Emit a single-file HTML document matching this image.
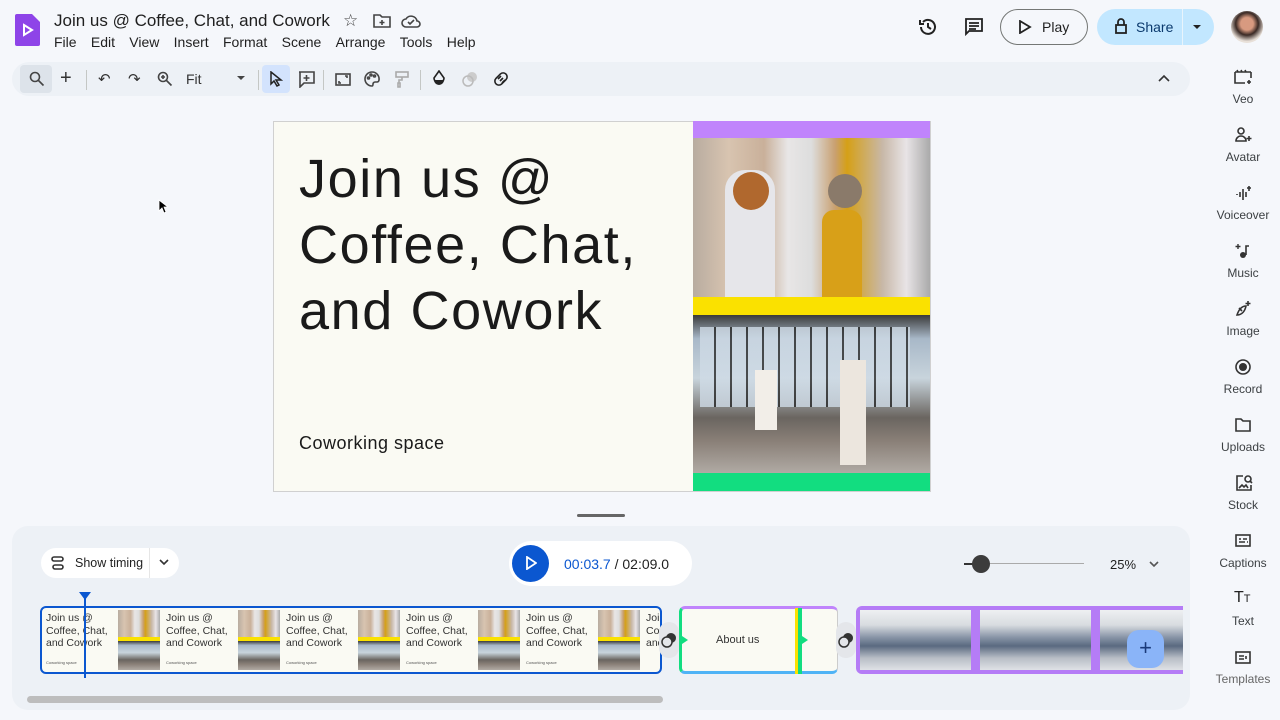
<!DOCTYPE html>
<html><head><meta charset="utf-8"><style>
*{box-sizing:border-box;margin:0;padding:0}
body{width:1280px;height:720px;overflow:hidden;background:#f5f7fb;font-family:"Liberation Sans",sans-serif;color:#1f1f1f;position:relative}
.abs{position:absolute}
.menu span{margin-right:14.3px}
.tb{position:absolute;top:62px;left:12px;width:1178px;height:34px;background:#edf1f6;border-radius:17px}
.ic{position:absolute;stroke:#444;fill:none;stroke-width:1.6}
.side{position:absolute;left:1204px;width:78px;text-align:center;font-size:12px;color:#3c4043}
.photoA{background:linear-gradient(90deg,#b8aca0 0%,#d8c4b0 15%,#c9b09a 30%,#e8e6e6 40%,#ddd 50%,#c9a070 60%,#d5a017 65%,#c8b8a8 80%,#e8e4e6 90%,#aaa 100%)}
.photoB{background:linear-gradient(180deg,#3a3a3a 0%,#a8b8c8 15%,#c8d4dc 40%,#6a6560 65%,#8a8078 80%,#b0aaa4 100%)}
.unit{position:absolute;top:0;width:120px;height:64px}
.unit .t{position:absolute;left:4px;top:4px;font-size:10.5px;line-height:12.5px;color:#333}
.unit .s{position:absolute;left:4px;top:52px;font-size:4px;color:#555}
.unit .im{position:absolute;left:76px;top:2px;width:42px;height:60px}
.ph3{position:absolute;top:610px;height:60px;background:linear-gradient(180deg,#eef0f2 0%,#d8dce0 25%,#8a96a8 45%,#5a6a80 60%,#b8bec6 80%,#dfe2e6 100%)}
</style></head><body>
<svg class="abs" style="left:15px;top:14px" width="26" height="32" viewBox="0 0 26 32"><path d="M2 0h15l8 8v22a2 2 0 0 1-2 2H2a2 2 0 0 1-2-2V2a2 2 0 0 1 2-2z" fill="#8e44e8"/><path d="M9 11l8 5-8 5z" fill="none" stroke="#fff" stroke-width="2"/></svg>
<div class="abs" style="left:54px;top:11px;font-size:17px;color:#1f1f1f">Join us @ Coffee, Chat, and Cowork</div>
<div class="abs" style="left:343px;top:11px;font-size:17px;color:#444">☆</div>
<svg class="ic" style="left:373px;top:13px" width="18" height="16" viewBox="0 0 18 16"><path d="M1 2h6l2 2h8v10H1z"/><path d="M9 7v5M6.5 9.5h5"/></svg>
<svg class="ic" style="left:401px;top:13px" width="20" height="16" viewBox="0 0 20 16"><path d="M5 14a4 4 0 0 1 0-8 6 6 0 0 1 11 2 3 3 0 0 1 0 6z"/><path d="M7 9l2 2 4-4"/></svg>
<div class="abs menu" style="left:54px;top:34px;font-size:14px;color:#1f1f1f"><span>File</span><span>Edit</span><span>View</span><span>Insert</span><span>Format</span><span>Scene</span><span>Arrange</span><span>Tools</span><span>Help</span></div>
<svg class="ic" style="left:918px;top:17px;stroke:#222;stroke-width:2" width="20" height="20" viewBox="0 0 20 20"><path d="M3 10a7 7 0 1 0 2-5"/><path d="M2 3v4h4"/><path d="M10 6v4l3 2"/></svg>
<svg class="ic" style="left:964px;top:17px;stroke:#222;stroke-width:1.8" width="20" height="20" viewBox="0 0 20 20"><path d="M2 2h16v12H5l-3 3z"/><path d="M5 6h10M5 9h10M5 12h7"/></svg>
<div class="abs" style="left:1000px;top:9px;width:88px;height:36px;border:1px solid #747775;border-radius:18px;font-size:14px;padding:9px 0 0 41px">Play</div>
<svg class="ic" style="left:1018px;top:20px;stroke:#222;stroke-width:1.8" width="14" height="14" viewBox="0 0 14 14"><path d="M2 1l10 6-10 6z"/></svg>
<div class="abs" style="left:1097px;top:9px;width:117px;height:36px;background:#c2e7ff;border-radius:18px"></div>
<div class="abs" style="left:1182px;top:9px;width:1px;height:36px;background:#e8f4fc"></div>
<svg class="ic" style="left:1114px;top:18px;stroke:#222;stroke-width:1.8" width="14" height="16" viewBox="0 0 14 16"><rect x="2" y="7" width="10" height="8"/><path d="M4 7V4a3 3 0 0 1 6 0v3"/></svg>
<div class="abs" style="left:1136px;top:19px;font-size:14px;color:#0b3a6e">Share</div>
<div class="abs" style="left:1193px;top:25px;border:4px solid transparent;border-top:4px solid #222"></div>
<div class="abs" style="left:1231px;top:11px;width:32px;height:32px;border-radius:50%;background:radial-gradient(circle at 50% 40%,#d89a80 25%,#3a2a25 45%,#e8e0d8 70%)"></div>
<div class="tb"></div>
<div class="abs" style="left:20px;top:65px;width:32px;height:28px;background:#dde3ea;border-radius:4px"></div>
<svg class="ic" style="left:29px;top:71px" width="16" height="16" viewBox="0 0 16 16"><circle cx="6" cy="6" r="4.5"/><path d="M9.5 9.5l5 5"/></svg>
<div class="abs" style="left:60px;top:67px;font-size:20px;color:#333">+</div>
<div class="abs" style="left:86px;top:70px;width:1px;height:20px;background:#c4c7c5"></div>
<div class="abs" style="left:98px;top:70px;font-size:15px;color:#333">↶</div>
<div class="abs" style="left:128px;top:70px;font-size:15px;color:#333">↷</div>
<svg class="ic" style="left:157px;top:71px" width="16" height="16" viewBox="0 0 16 16"><circle cx="6" cy="6" r="4.5"/><path d="M9.5 9.5l5 5M6 4v4M4 6h4"/></svg>
<div class="abs" style="left:186px;top:71px;font-size:14px;color:#333">Fit</div>
<div class="abs" style="left:237px;top:76px;border:4px solid transparent;border-top:4px solid #444"></div>
<div class="abs" style="left:258px;top:70px;width:1px;height:20px;background:#c4c7c5"></div>
<div class="abs" style="left:262px;top:65px;width:28px;height:28px;background:#d3e3fd;border-radius:4px"></div>
<svg class="abs" style="left:269px;top:71px" width="14" height="16" viewBox="0 0 14 16"><path d="M2 1l10 8H7l3 5-2 1-3-5-3 3z" fill="none" stroke="#222" stroke-width="1.5"/></svg>
<svg class="ic" style="left:298px;top:71px" width="17" height="17" viewBox="0 0 17 17"><path d="M1 1h15v11H6l-4 4V1"/><path d="M8.5 4v6M5.5 7h6"/></svg>
<div class="abs" style="left:323px;top:70px;width:1px;height:20px;background:#c4c7c5"></div>
<svg class="ic" style="left:335px;top:73px" width="16" height="13" viewBox="0 0 16 13"><rect x="1" y="1" width="14" height="11"/><path d="M4 8v2h2M12 5V3h-2"/></svg>
<svg class="ic" style="left:364px;top:71px" width="16" height="16" viewBox="0 0 16 16"><path d="M8 1a7 7 0 1 0 0 14c1 0 1-1 1-2s1-2 2-2h2a2 2 0 0 0 2-2 7 7 0 0 0-7-8z"/><circle cx="4.5" cy="7" r="1"/><circle cx="7" cy="4" r="1"/><circle cx="10.5" cy="5" r="1"/></svg>
<svg class="ic" style="left:394px;top:71px;stroke:#aaa" width="16" height="17" viewBox="0 0 16 17"><rect x="2" y="1" width="12" height="5"/><path d="M8 6v3H5v3M4 12h2v4H4z"/></svg>
<div class="abs" style="left:420px;top:70px;width:1px;height:20px;background:#c4c7c5"></div>
<svg class="abs" style="left:432px;top:70px" width="14" height="17" viewBox="0 0 14 17"><path d="M7 1L2 8a5 5 0 1 0 10 0z" fill="none" stroke="#222" stroke-width="1.6"/><path d="M2 10h10a5 5 0 0 1-10 0z" fill="#222"/></svg>
<svg class="abs" style="left:462px;top:71px" width="16" height="16" viewBox="0 0 16 16"><circle cx="10" cy="6" r="5" fill="#ccc"/><circle cx="6" cy="10" r="5" fill="none" stroke="#bbb" stroke-width="1.5"/></svg>
<svg class="ic" style="left:492px;top:70px;stroke:#222" width="18" height="18" viewBox="0 0 18 18"><rect x="2" y="5" width="14" height="8" rx="4" transform="rotate(-45 9 9)"/><path d="M6 9l3-3M8 11l3-3M10 13l3-3"/></svg>
<svg class="ic" style="left:1158px;top:74px;stroke:#333" width="12" height="8" viewBox="0 0 12 8"><path d="M1 7l5-5 5 5"/></svg>
<svg class="abs" style="left:158px;top:199px" width="10" height="15" viewBox="0 0 10 15"><path d="M1 1v11l3-3 2 5 2-1-2-5h4z" fill="#000" stroke="#fff" stroke-width="0.8"/></svg>
<div class="abs" style="left:273px;top:121px;width:658px;height:371px;background:#fafaf3;border:1px solid #d0d0d0"></div>
<div class="abs" style="left:299px;top:146px;font-size:54px;line-height:66px;color:#1a1a1a;letter-spacing:1.6px">Join us @<br>Coffee, Chat,<br>and Cowork</div>
<div class="abs" style="left:299px;top:433px;font-size:18px;color:#1a1a1a;letter-spacing:0.5px">Coworking space</div>
<div class="abs" style="left:693px;top:121px;width:237px;height:17px;background:#c084fc"></div>
<div class="abs photoA" style="left:693px;top:138px;width:237px;height:159px"></div>
<div class="abs" style="left:725px;top:170px;width:50px;height:130px;background:#e6e6ea;border-radius:20px 20px 0 0"></div>
<div class="abs" style="left:733px;top:172px;width:36px;height:38px;background:#b0682e;border-radius:50%"></div>
<div class="abs" style="left:822px;top:210px;width:40px;height:90px;background:#d8a018;border-radius:12px 12px 0 0"></div>
<div class="abs" style="left:828px;top:174px;width:34px;height:34px;background:#8a7a6a;border-radius:50%"></div>
<div class="abs" style="left:693px;top:297px;width:237px;height:18px;background:#fae100"></div>
<div class="abs photoB" style="left:693px;top:315px;width:237px;height:158px"></div>
<div class="abs" style="left:700px;top:327px;width:210px;height:80px;background:repeating-linear-gradient(90deg,#cfdbe6 0 14px,#2a2a2a 14px 16px);opacity:.8"></div>
<div class="abs" style="left:755px;top:370px;width:22px;height:60px;background:#f2eee8"></div>
<div class="abs" style="left:840px;top:360px;width:26px;height:105px;background:#ece6de"></div>
<div class="abs" style="left:693px;top:473px;width:237px;height:18px;background:#12dd80"></div>
<div class="abs" style="left:577px;top:514px;width:48px;height:3px;background:#666;border-radius:2px"></div>
<div class="abs" style="left:12px;top:526px;width:1178px;height:184px;background:#edf1f6;border-radius:16px"></div>
<div class="abs" style="left:41px;top:548px;width:138px;height:30px;background:#fff;border-radius:15px"></div>
<div class="abs" style="left:149px;top:548px;width:1px;height:30px;background:#e6e6e6"></div>
<svg class="ic" style="left:51px;top:556px;stroke:#333" width="14" height="14" viewBox="0 0 14 14"><rect x="1" y="1" width="11" height="4" rx="2"/><rect x="2" y="9" width="10" height="4" rx="2"/></svg>
<div class="abs" style="left:75px;top:556px;font-size:12.5px;color:#1f1f1f">Show timing</div>
<svg class="ic" style="left:159px;top:559px;stroke:#333" width="10" height="7" viewBox="0 0 10 7"><path d="M1 1l4 4 4-4"/></svg>
<div class="abs" style="left:509px;top:541px;width:183px;height:45px;background:#fff;border-radius:23px"></div>
<div class="abs" style="left:512px;top:545px;width:37px;height:37px;background:#0b57d0;border-radius:50%"></div>
<svg class="abs" style="left:525px;top:556px" width="12" height="14" viewBox="0 0 12 14"><path d="M2 1l9 6-9 6z" fill="none" stroke="#fff" stroke-width="1.8"/></svg>
<div class="abs" style="left:564px;top:556px;font-size:14px"><span style="color:#0b57d0">00:03.7</span> / 02:09.0</div>
<div class="abs" style="left:966px;top:563px;width:118px;height:1px;background:#aaa"></div>
<div class="abs" style="left:964px;top:563px;width:10px;height:2px;background:#333"></div>
<div class="abs" style="left:972px;top:555px;width:18px;height:18px;background:#3c3c3c;border-radius:50%"></div>
<div class="abs" style="left:1110px;top:557px;font-size:13px">25%</div>
<svg class="ic" style="left:1149px;top:561px;stroke:#555" width="10" height="7" viewBox="0 0 10 7"><path d="M1 1l4 4 4-4"/></svg>
<div class="abs" style="left:40px;top:606px;width:622px;height:68px;border:2px solid #0b57d0;border-radius:6px;background:#fafaf3;overflow:hidden">
<div style="position:absolute;left:0;top:0;width:618px;height:64px">
<div class="unit" style="left:0"><div class="t">Join us @<br>Coffee, Chat,<br>and Cowork</div><div class="s">Coworking space</div><div class="im"><div class="photoA" style="height:27px"></div><div style="height:4px;background:#fae100"></div><div class="photoB" style="height:29px"></div></div></div>
<div class="unit" style="left:120px"><div class="t">Join us @<br>Coffee, Chat,<br>and Cowork</div><div class="s">Coworking space</div><div class="im"><div class="photoA" style="height:27px"></div><div style="height:4px;background:#fae100"></div><div class="photoB" style="height:29px"></div></div></div>
<div class="unit" style="left:240px"><div class="t">Join us @<br>Coffee, Chat,<br>and Cowork</div><div class="s">Coworking space</div><div class="im"><div class="photoA" style="height:27px"></div><div style="height:4px;background:#fae100"></div><div class="photoB" style="height:29px"></div></div></div>
<div class="unit" style="left:360px"><div class="t">Join us @<br>Coffee, Chat,<br>and Cowork</div><div class="s">Coworking space</div><div class="im"><div class="photoA" style="height:27px"></div><div style="height:4px;background:#fae100"></div><div class="photoB" style="height:29px"></div></div></div>
<div class="unit" style="left:480px"><div class="t">Join us @<br>Coffee, Chat,<br>and Cowork</div><div class="s">Coworking space</div><div class="im"><div class="photoA" style="height:27px"></div><div style="height:4px;background:#fae100"></div><div class="photoB" style="height:29px"></div></div></div>
<div class="unit" style="left:600px"><div class="t">Join us @<br>Coffee, Chat,<br>and Cowork</div></div>
</div></div>
<div class="abs" style="left:84px;top:598px;width:2px;height:80px;background:#0b57d0"></div>
<div class="abs" style="left:79px;top:592px;border:6px solid transparent;border-top:8px solid #0b57d0"></div>
<div class="abs" style="left:679px;top:606px;width:159px;height:68px;background:#fafaf3;border-radius:6px;border-top:3px solid #c084fc;border-bottom:3px solid #4fb3f6;border-left:3px solid #12dd80;border-right:1px solid #ccc"></div>
<div class="abs" style="left:716px;top:634px;font-size:11px;color:#333">About us</div>
<div class="abs" style="left:795px;top:608px;width:3px;height:66px;background:#fae100"></div>
<div class="abs" style="left:798px;top:608px;width:4px;height:66px;background:#12dd80"></div>
<div class="abs" style="left:802px;top:636px;border:4px solid transparent;border-left:6px solid #12dd80"></div>
<div class="abs" style="left:682px;top:636px;border:4px solid transparent;border-left:6px solid #12dd80"></div>
<div class="abs" style="left:659px;top:622px;width:20px;height:36px;background:#e4e6ea;border-radius:10px"></div>
<div class="abs" style="left:836px;top:622px;width:20px;height:36px;background:#e4e6ea;border-radius:10px"></div>
<svg class="abs" style="left:661px;top:632px" width="16" height="16" viewBox="0 0 16 16"><circle cx="10" cy="6" r="5" fill="#333"/><circle cx="6" cy="10" r="5" fill="#e4e6ea" stroke="#333" stroke-width="1.5"/></svg>
<svg class="abs" style="left:838px;top:632px" width="16" height="16" viewBox="0 0 16 16"><circle cx="10" cy="6" r="5" fill="#333"/><circle cx="6" cy="10" r="5" fill="#e4e6ea" stroke="#333" stroke-width="1.5"/></svg>
<div class="abs" style="left:856px;top:606px;width:327px;height:68px;background:#b57cf6;border-radius:6px 0 0 6px"></div>
<div class="ph3" style="left:860px;width:111px"></div>
<div class="ph3" style="left:980px;width:111px"></div>
<div class="ph3" style="left:1100px;width:83px"></div>
<div class="abs" style="left:1127px;top:630px;width:37px;height:38px;background:#8ab4f8;border-radius:12px;color:#1a3a7a;font-size:22px;text-align:center;line-height:36px">+</div>
<div class="abs" style="left:27px;top:696px;width:636px;height:7px;background:#bdbdbd;border-radius:4px"></div>
<svg class="ic" style="left:1234px;top:69px;stroke:#333" width="18" height="16" viewBox="0 0 18 16"><path d="M1 3h16M1 3v11h10M17 3v6M3 1l1 2M7 1l1 2M11 1l1 2M15 11v4M13 13h4"/></svg>
<div class="side" style="top:92px">Veo</div>
<svg class="ic" style="left:1235px;top:127px;stroke:#333" width="18" height="16" viewBox="0 0 18 16"><circle cx="6" cy="4" r="3"/><path d="M1 14a5 5 0 0 1 10 0zM14 9v5M11.5 11.5h5"/></svg>
<div class="side" style="top:150px">Avatar</div>
<svg class="ic" style="left:1236px;top:185px;stroke:#333" width="16" height="16" viewBox="0 0 16 16"><path d="M1 9v1M4 7v5M7 4v11M10 7v5M13 1v5M11 3h4"/></svg>
<div class="side" style="top:208px">Voiceover</div>
<svg class="abs" style="left:1235px;top:243px" width="16" height="16" viewBox="0 0 16 16"><circle cx="8" cy="12" r="3" fill="#333"/><path d="M11 12V3h3" stroke="#333" stroke-width="1.6" fill="none"/><path d="M3 1v5M0.5 3.5h5" stroke="#333" stroke-width="1.4"/></svg>
<div class="side" style="top:266px">Music</div>
<svg class="ic" style="left:1234px;top:300px;stroke:#333" width="18" height="18" viewBox="0 0 18 18"><path d="M3 15c2-6 5-9 9-9-1 5-4 9-9 9zM5 8l3 3M14 1v5M11.5 3.5h5"/></svg>
<div class="side" style="top:324px">Image</div>
<svg class="abs" style="left:1235px;top:359px" width="16" height="16" viewBox="0 0 16 16"><circle cx="8" cy="8" r="7" fill="none" stroke="#333" stroke-width="1.6"/><circle cx="8" cy="8" r="4" fill="#333"/></svg>
<div class="side" style="top:382px">Record</div>
<svg class="ic" style="left:1235px;top:418px;stroke:#333" width="16" height="14" viewBox="0 0 16 14"><path d="M1 1h5l2 2h7v10H1z"/></svg>
<div class="side" style="top:440px">Uploads</div>
<svg class="ic" style="left:1235px;top:474px;stroke:#333" width="18" height="18" viewBox="0 0 18 18"><path d="M8 2H2v14h14v-5"/><circle cx="13" cy="5" r="3"/><path d="M15 7l2 2M4 14l3-3 2 2 2-2 2 3"/></svg>
<div class="side" style="top:498px">Stock</div>
<svg class="ic" style="left:1235px;top:534px;stroke:#333" width="16" height="13" viewBox="0 0 16 13"><rect x="1" y="1" width="14" height="11"/><path d="M4 5h2M8 5h4M4 8h6M12 8h1"/></svg>
<div class="side" style="top:556px">Captions</div>
<div class="abs" style="left:1234px;top:589px;font-size:16px;color:#222">T<span style="font-size:11px">T</span></div>
<div class="side" style="top:614px">Text</div>
<svg class="ic" style="left:1235px;top:651px;stroke:#333" width="16" height="13" viewBox="0 0 16 13"><rect x="1" y="1" width="14" height="11"/><path d="M4 5h5M4 8h5M11 5v3"/></svg>
<div class="side" style="top:672px;color:#666">Templates</div>
</body></html>
